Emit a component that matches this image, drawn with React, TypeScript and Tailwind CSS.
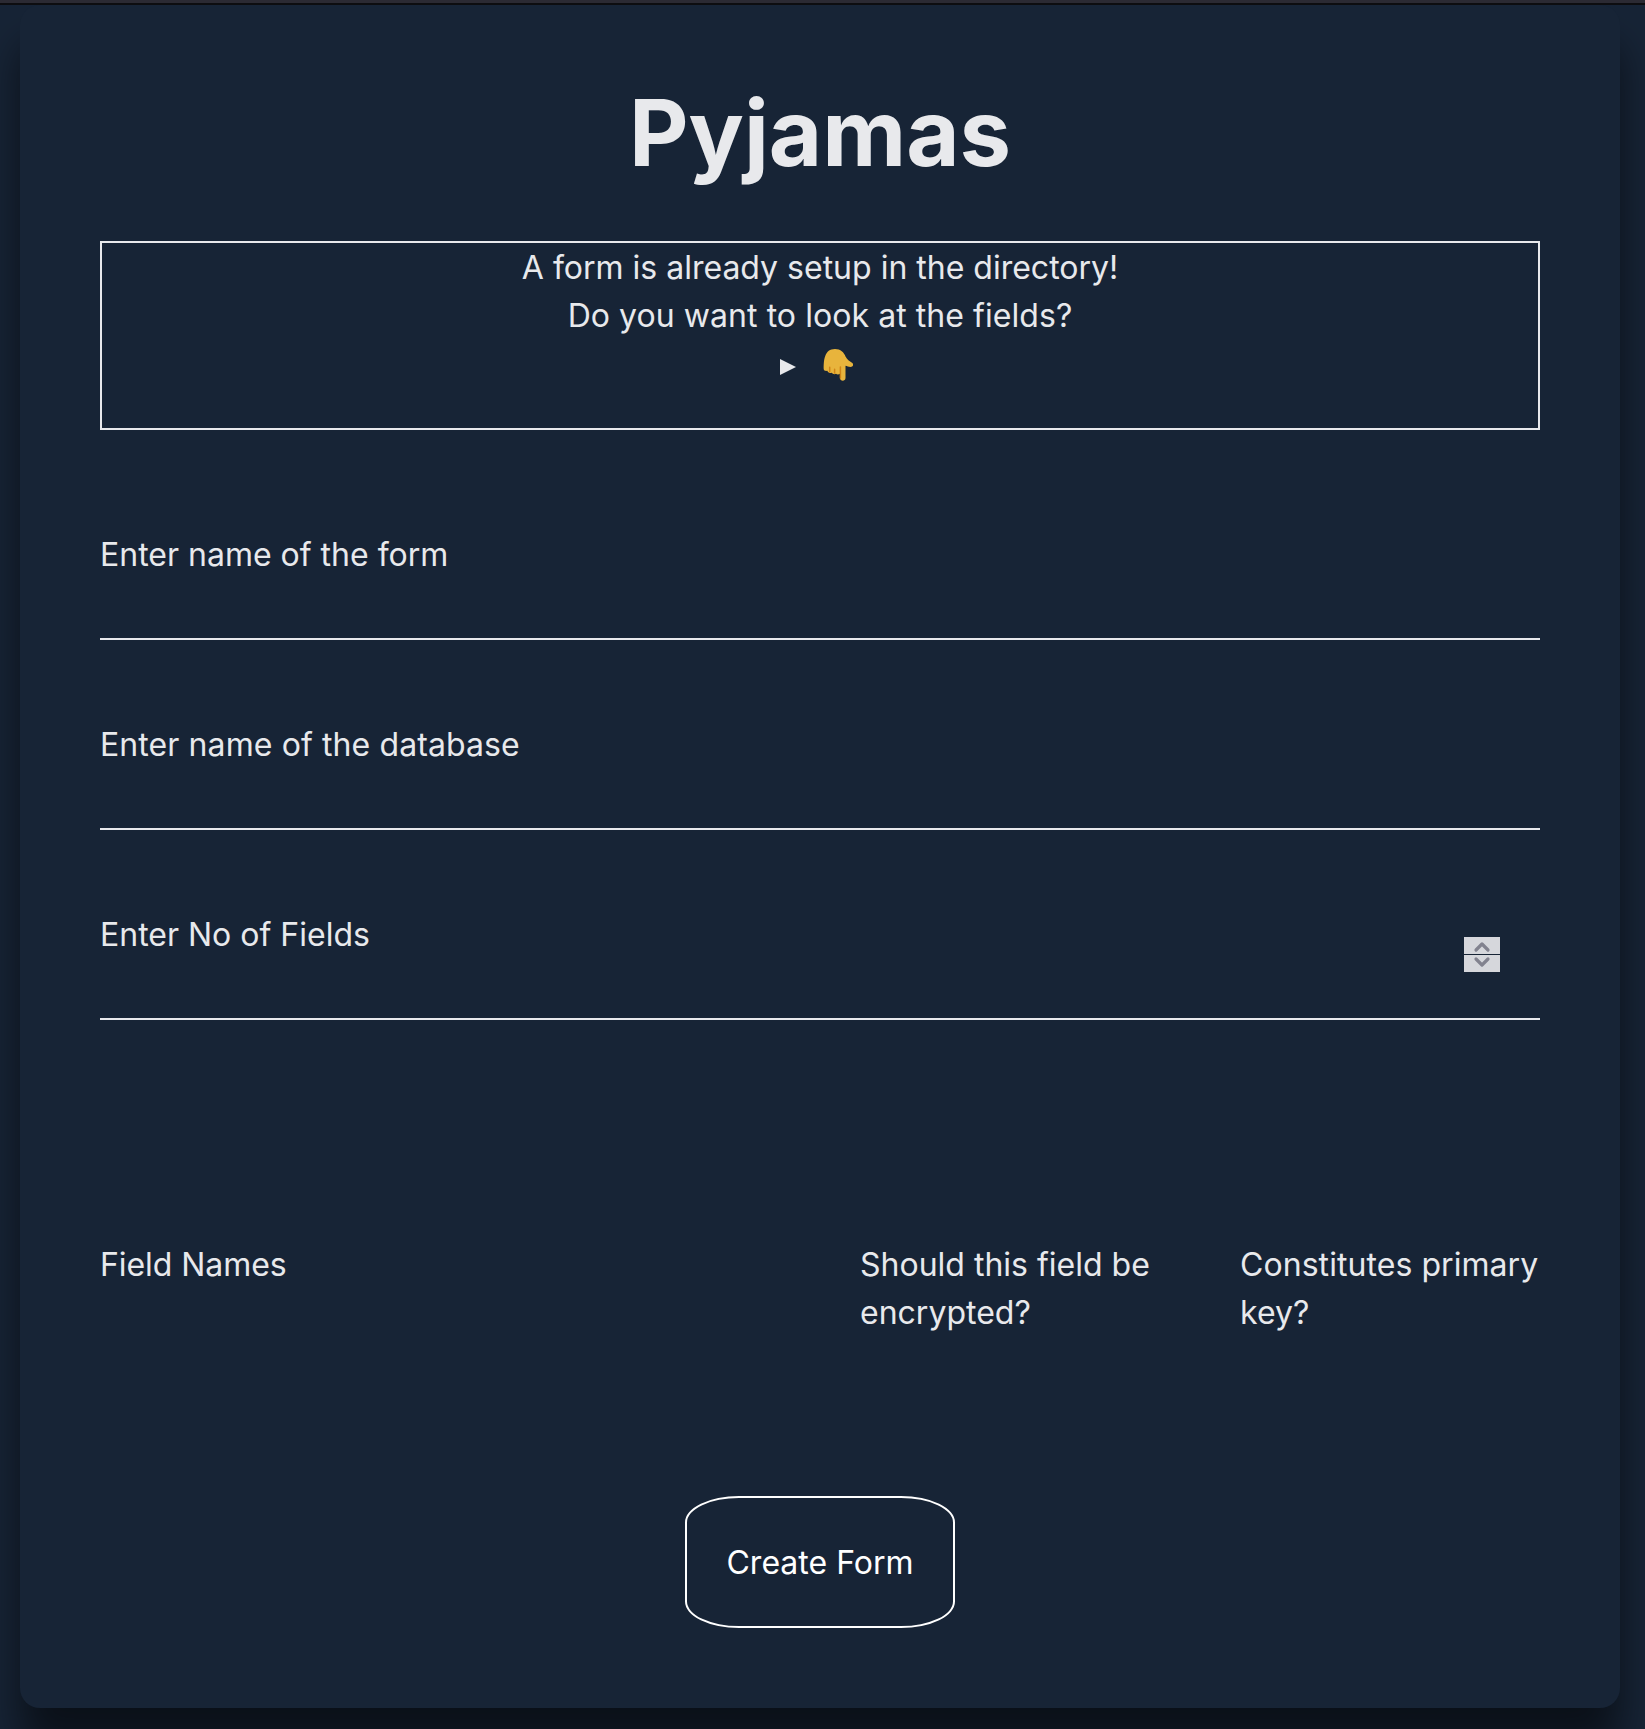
import { ChevronDown, ChevronUp } from 'lucide-react';

function PointingHand() {
  return (
    <svg className="mt-0.5 h-8 w-[30px]" viewBox="0 0 30 32">
      <path
        d="M.7 20C.7 11 1.400 0 12 0c5.500 0 9 3.500 10.500 7.500 1.500 3 4 4.700 6.500 6.200 2 1.300 1.400 4.300-1.500 4.300-2 0-3.500-1-5-1.200V29c0 3.700-5.500 3.700-5.500 0v-4.300c-1 1-3 1.200-4 .1-1.500.8-3.500.3-4.200-1-2.500 1-4-.5-4.500-2-2 .3-3.600-.3-3.600-1.800Z"
        fill="#e8b43c"
      />
      <path d="M6.700 18.200v4.500M11.600 20.300v3.700M17.400 18v11" fill="none" stroke="#d08416" strokeWidth="1.500" strokeLinecap="round" />
    </svg>
  );
}

export default function App() {
  return (
    <div className="h-[1729px] overflow-hidden bg-[#172436] font-['Inter',sans-serif] text-[32px] leading-[48px] text-[#e8e9ec]">
      <div className="relative z-10 h-[5px] border-b-2 border-[#0d0d10] bg-[#2b2a33]" />
      <main className="ml-5 h-[1703px] w-[1600px] rounded-[20px] bg-[#172436] px-20 pt-[76px] shadow-[0_38px_40px_rgba(0,0,0,0.55)]">
        <h1 className="h-[160px] text-center text-[92px] leading-[104px] font-bold">Pyjamas</h1>
        <section className="h-[189px] border-2 border-[#e8e9ec] pt-px text-center">
          <p>A form is already setup in the directory!</p>
          <p className="tracking-[0.06px]">Do you want to look at the fields?</p>
          <div className="flex h-12 items-center justify-center">
            <svg className="mt-[6px] mr-[27px] ml-[-7px] h-4 w-4" viewBox="0 0 16 16">
              <path d="M0 0L16 8L0 16Z" fill="#e8e9ec" />
            </svg>
            <PointingHand />
          </div>
        </section>
        <form>
          <label className="mt-[101px] block h-[109px] border-b-2 border-[#e8e9ec]">Enter name of the form</label>
          <label className="mt-[81px] block h-[109px] border-b-2 border-[#e8e9ec] tracking-[0.1px]">Enter name of the database</label>
          <label className="mt-[81px] flex h-[109px] items-start justify-between border-b-2 border-[#e8e9ec] pr-10">
            Enter No of Fields
            <span className="mt-[26px] grid w-9 gap-px text-[#82828f]">
              <span className="flex h-[17px] items-center justify-center overflow-hidden bg-[#d6d7dc] pt-0.5">
                <ChevronUp className="shrink-0" size={24} strokeWidth={3.2} />
              </span>
              <span className="flex h-[17px] items-center justify-center overflow-hidden bg-[#d6d7dc] pb-[3px]">
                <ChevronDown className="shrink-0" size={24} strokeWidth={3.2} />
              </span>
            </span>
          </label>
          <div className="mt-[221px] grid grid-cols-[760px_380px_300px]">
            <p className="tracking-[-0.06px]">Field Names</p>
            <p>Should this field be<br />encrypted?</p>
            <p className="tracking-[0.06px]">Constitutes primary<br />key?</p>
          </div>
          <button type="button" className="mx-auto mt-[159px] block h-[132px] w-[270px] rounded-[20%] border-2 border-white pt-0.5 text-white">Create Form</button>
        </form>
      </main>
    </div>
  );
}
